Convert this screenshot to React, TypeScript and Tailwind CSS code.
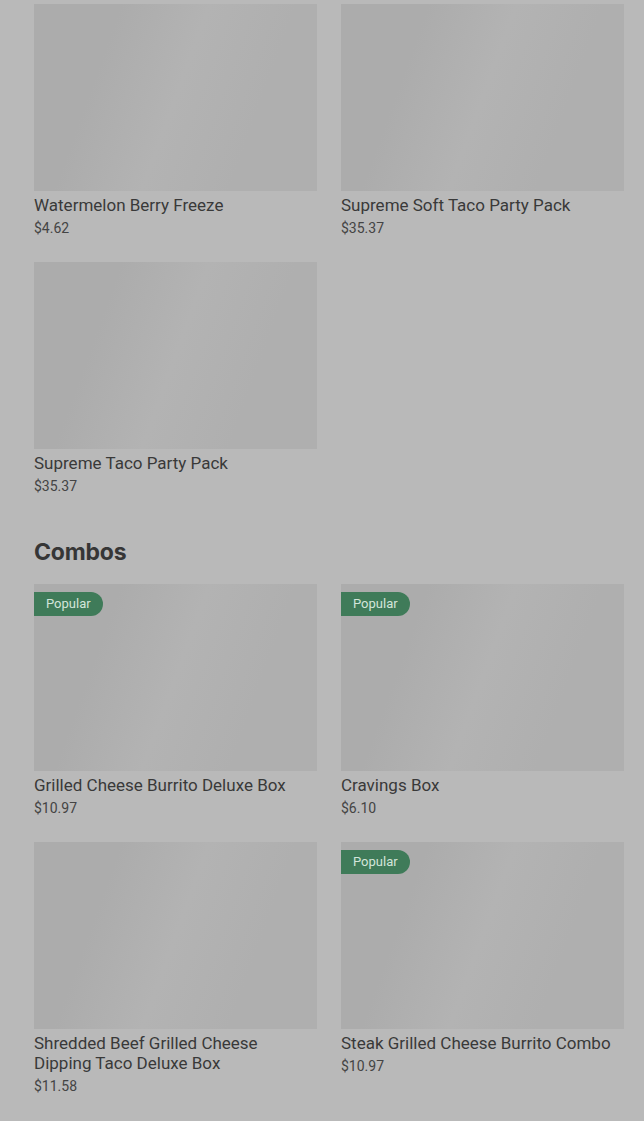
// Menu grid under a dimmed overlay: product cards with image placeholders, names and prices.
type Item = { name: string; price: string; popular?: boolean };

const drinks: Item[] = [
  { name: "Watermelon Berry Freeze", price: "$4.62" },
  { name: "Supreme Soft Taco Party Pack", price: "$35.37" },
  { name: "Supreme Taco Party Pack", price: "$35.37" },
];

const combos: Item[] = [
  { name: "Grilled Cheese Burrito Deluxe Box", price: "$10.97", popular: true },
  { name: "Cravings Box", price: "$6.10", popular: true },
  { name: "Shredded Beef Grilled Cheese Dipping Taco Deluxe Box", price: "$11.58" },
  { name: "Steak Grilled Cheese Burrito Combo", price: "$10.97", popular: true },
];

function Card({ item }: { item: Item }) {
  return (
    <div className="flex flex-col">
      <div className="relative h-[187px] w-full bg-[linear-gradient(110deg,#acacac_25%,#b3b3b3_50%,#afafaf_75%)]">
        {item.popular && (
          <span className="absolute left-0 top-2 flex h-6 items-center rounded-r-full bg-[#3f7b59] pl-3 pr-3 text-[13px] text-[#d3e5da]">
            Popular
          </span>
        )}
      </div>
      <p className="mt-1 text-[17px] leading-5 text-[#393939]">{item.name}</p>
      <p className="mt-1 text-[14px] leading-[18px] text-[#444]">{item.price}</p>
    </div>
  );
}

export default function App() {
  return (
    <div className="min-h-[1121px] bg-[#b9b9b9] pb-6 pl-[34px] pr-[20px] pt-1 font-['Roboto',sans-serif]">
      <div className="grid grid-cols-2 gap-x-6 gap-y-[25px]">
        {drinks.map((d) => (
          <Card key={d.name} item={d} />
        ))}
      </div>
      <h2 className="mb-4 mt-[41px] font-['Inter',sans-serif] text-[23px] font-bold leading-8 tracking-[-0.2px] text-[#363636]">
        Combos
      </h2>
      <div className="grid grid-cols-2 gap-x-6 gap-y-[25px]">
        {combos.map((c) => (
          <Card key={c.name} item={c} />
        ))}
      </div>
    </div>
  );
}
